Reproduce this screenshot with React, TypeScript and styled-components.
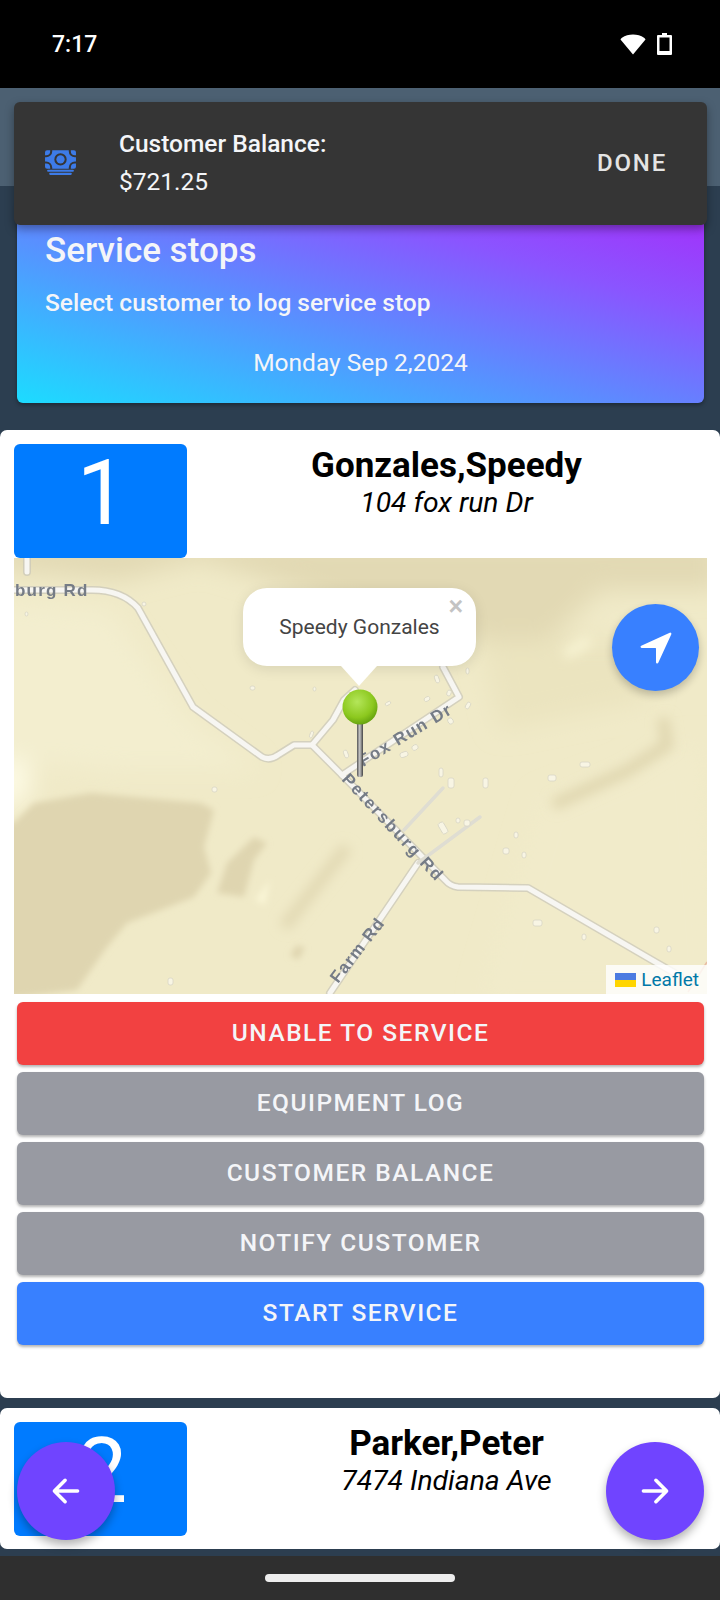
import styled, { createGlobalStyle } from "styled-components";
import { IoArrowBack, IoArrowForward, IoCash, IoNavigate } from "react-icons/io5";

const Global = createGlobalStyle`
  html, body { margin: 0; padding: 0; background: #000; }
  * { box-sizing: border-box; }
  body { font-family: Roboto, "Liberation Sans", sans-serif; }
`;

const Page = styled.div`
  position: relative;
  display: flex;
  flex-direction: column;
  width: 720px;
  height: 1600px;
  overflow: hidden;
  background: #2c3e50;
`;
const StatusBar = styled.div`
  display: flex;
  align-items: center;
  justify-content: space-between;
  height: 88px;
  flex: none;
  padding: 0 48px 0 52px;
  background: #000;
  color: #fff;
  font-size: 23px;
  font-weight: 500;
`;
const StatusIcons = styled.div`
  display: flex;
  align-items: center;
  gap: 11px;
`;
const Header = styled.div`
  height: 98px;
  flex: none;
  background: #4c6072;
`;
const Content = styled.div`
  flex: 1;
  display: flex;
  flex-direction: column;
  min-height: 0;
`;
const Hero = styled.div`
  display: flex;
  flex-direction: column;
  height: 203px;
  flex: none;
  margin: 14px 16px 0 17px;
  padding: 32px 28px 0;
  border-radius: 6px;
  color: #f4f5f8;
  background: linear-gradient(to top right, #1cdcff 0%, #5a8eff 42%, #8a55ff 72%, #a62bfa 100%);
  box-shadow: 0 2px 4px rgba(0, 0, 0, 0.35);
`;
const HeroTitle = styled.div`
  font-size: 35px;
  font-weight: 500;
  line-height: 38px;
`;
const HeroSub = styled.div`
  margin-top: 18px;
  font-size: 24.500px;
  font-weight: 500;
  line-height: 30px;
`;
const HeroDate = styled.div`
  margin-top: 30px;
  font-size: 24.500px;
  line-height: 30px;
  text-align: center;
`;
const StopCard = styled.div<{ $top: number; $height: number }>`
  flex: none;
  height: ${(p) => p.$height}px;
  margin-top: ${(p) => p.$top}px;
  padding-top: 14px;
  background: #fff;
  border-radius: 7px;
`;
const StopHead = styled.div`
  display: flex;
  height: 114px;
  padding: 0 14px;
`;
const NumBox = styled.div`
  display: flex;
  align-items: center;
  justify-content: center;
  flex: none;
  width: 173px;
  height: 114px;
  border-radius: 6px;
  background: #007bff;
  color: #fff;
  font-size: 90px;
  font-weight: 400;
  line-height: 1;
  padding: 0 0 14px 3px;
`;
const StopInfo = styled.div`
  flex: 1;
  text-align: center;
`;
const StopName = styled.div`
  color: #000;
  font-size: 35px;
  font-weight: 700;
  line-height: 43px;
`;
const StopAddress = styled.div`
  color: #000;
  font-size: 28.300px;
  font-style: italic;
  line-height: 31px;
`;
const MapBox = styled.div`
  position: relative;
  height: 436px;
  margin: 0 13px 0 14px;
  overflow: hidden;
  background: #f0eac8;
`;
const MapArt = styled.svg`
  display: block;
  width: 100%;
  height: 100%;
`;
const Popup = styled.div`
  position: absolute;
  left: 229px;
  top: 30px;
  display: flex;
  align-items: center;
  justify-content: center;
  width: 233px;
  height: 78px;
  border-radius: 24px;
  background: #fff;
  color: #444;
  font-size: 21px;
  box-shadow: 0 3px 14px rgba(0, 0, 0, 0.1);

  &::after {
    content: "";
    position: absolute;
    left: 98px;
    top: 78px;
    border-left: 18px solid transparent;
    border-right: 18px solid transparent;
    border-top: 20px solid #fff;
  }
`;
const PopupClose = styled.span`
  position: absolute;
  right: 13px;
  top: 3px;
  color: #c3c3c3;
  font-family: "Liberation Sans", sans-serif;
  font-size: 25px;
  font-weight: 700;
  line-height: 30px;
`;
const Pin = styled.svg`
  position: absolute;
  left: 328px;
  top: 131px;
`;
const NavFab = styled.div`
  position: absolute;
  right: 8px;
  top: 46px;
  display: flex;
  align-items: center;
  justify-content: center;
  width: 87px;
  height: 87px;
  border-radius: 50%;
  background: #3880ff;
  color: #fff;
  box-shadow: 0 4px 8px rgba(0, 0, 0, 0.22);
`;
const Attribution = styled.div`
  position: absolute;
  right: 0;
  bottom: 0;
  display: flex;
  align-items: center;
  gap: 5px;
  height: 29px;
  padding: 0 8px 0 9px;
  background: rgba(255, 255, 255, 0.8);
  color: #0078a8;
  font-size: 19px;
`;
const Actions = styled.div`
  display: flex;
  flex-direction: column;
  gap: 7px;
  margin: 8px 16px 0 17px;
`;
const Action = styled.div<{ $bg: string }>`
  display: flex;
  align-items: center;
  justify-content: center;
  height: 63px;
  padding-bottom: 2px;
  border-radius: 6px;
  background: ${(p) => p.$bg};
  color: #f4f5f8;
  font-size: 24.500px;
  font-weight: 500;
  letter-spacing: 1.5px;
  box-shadow: 0 2px 3px rgba(0, 0, 0, 0.3);
`;
const Snack = styled.div`
  position: absolute;
  left: 14px;
  top: 102px;
  display: flex;
  align-items: center;
  width: 693px;
  height: 123px;
  padding-bottom: 2px;
  border-radius: 6px;
  background: #353535;
  box-shadow: 0 4px 10px rgba(0, 0, 0, 0.35);
`;
const SnackIcon = styled.div`
  display: flex;
  flex: none;
  width: 105px;
  padding-left: 30px;
  color: #3d7be8;
`;
const SnackText = styled.div`
  flex: 1;
  color: #f4f5f8;
  font-size: 24.500px;
  line-height: 38px;
`;
const SnackTitle = styled.div`
  font-weight: 500;
`;
const SnackAction = styled.div`
  padding-right: 40px;
  color: #e4e4e4;
  font-size: 24px;
  font-weight: 500;
  letter-spacing: 1.800px;
`;
const RoundFab = styled.div<{ $side: "left" | "right" }>`
  position: absolute;
  ${(p) => p.$side}: ${(p) => (p.$side === "left" ? 17 : 16)}px;
  top: 1442px;
  display: flex;
  align-items: center;
  justify-content: center;
  width: 98px;
  height: 98px;
  border-radius: 50%;
  background: #7044ff;
  color: #fff;
  box-shadow: 0 5px 10px rgba(0, 0, 0, 0.3);
`;
const NavBar = styled.div`
  display: flex;
  align-items: center;
  justify-content: center;
  flex: none;
  height: 44px;
  background: #2f2f2f;
`;
const Handle = styled.div`
  width: 190px;
  height: 8px;
  border-radius: 4px;
  background: #eee;
`;

const buildings = [
  [439, 768, 4, 9, 0], [448, 778, 6, 10, 0], [483, 778, 5, 10, 0], [548, 775, 8, 6, 0],
  [580, 762, 10, 5, 0], [440, 822, 6, 12, -30], [456, 818, 4, 5, 0], [464, 820, 6, 6, 0],
  [514, 832, 4, 6, 0], [503, 848, 6, 6, 0], [522, 852, 4, 6, 0], [533, 920, 9, 6, 0],
  [582, 934, 4, 6, 0], [654, 927, 5, 6, 0], [667, 946, 4, 6, 0], [212, 787, 5, 5, 0],
  [168, 978, 5, 7, 0], [25, 612, 3, 4, 0], [142, 602, 4, 4, 0], [250, 686, 5, 4, 0],
  [313, 687, 3, 4, 0], [435, 675, 4, 8, -20], [424, 697, 6, 4, -30], [447, 690, 4, 6, 20],
  [466, 668, 3, 6, 0], [466, 702, 4, 7, 30], [400, 752, 8, 5, -20], [412, 745, 6, 5, -30],
  [385, 702, 6, 3, -30], [344, 750, 4, 8, -20], [310, 731, 3, 7, 20], [448, 718, 5, 6, -30],
];

const roads = [
  "M27 558V572M14 590H92Q122 590 138 608L193 707L262 757Q270 761 278 755L294 745H312L342 775L445 880Q450 886 458 887L528 888L657 963L680 976",
  "M312 745L333 720L344 700L355 690",
  "M342 775L459 697L443 667",
  "M330 993L418 863",
];

function MapPicture() {
  return (
    <MapArt viewBox="14 558 693 436">
      <defs>
        <filter id="soft" x="-30%" y="-30%" width="160%" height="160%">
          <feGaussianBlur stdDeviation="12" />
        </filter>
        <filter id="softer" x="-30%" y="-30%" width="160%" height="160%">
          <feGaussianBlur stdDeviation="3" />
        </filter>
        <filter id="ridge" x="-30%" y="-30%" width="160%" height="160%">
          <feGaussianBlur stdDeviation="6" />
        </filter>
        <filter id="hair" x="-5%" y="-5%" width="110%" height="110%">
          <feGaussianBlur stdDeviation="0.5" />
        </filter>
      </defs>
      <g filter="url(#soft)">
        <path d="M0 540H720V590L600 590L540 650L420 630L300 590L200 560L120 580L0 570Z" fill="#e2d9b4" />
        <path d="M-10 600L110 610L190 720L260 770L120 770L-10 760Z" fill="#f3eecf" />
        <path d="M-10 760L30 760L30 800L-10 810Z" fill="#fdfae4" />
        <path d="M480 640L640 640L650 700L500 730Z" fill="#ebe4bf" />
        <path d="M540 800L700 740L720 1000L480 1000Z" fill="#f1ebca" />
      </g>
      <g filter="url(#softer)">
        <path d="M14 823L34 803L91 793L201 803L214 810L204 847L211 873L194 897L161 910L127 923L107 947L77 990L0 1000V823Z" fill="#dfd5b0" />
        <path d="M254 837L227 863L217 893L244 897L254 860L267 843Z" fill="#dfd5b0" />
        <path d="M297 945L290 955L298 960L305 948Z" fill="#dfd5b0" />
        <path d="M255 900L270 880L265 905Z" fill="#f9f5d6" />
      </g>
      <g filter="url(#ridge)" fill="none">
        <path d="M347 847L284 927" stroke="#e2d9b4" strokeWidth="12" />
        <path d="M663 718L667 745L627 771L553 805" stroke="#e0d7b0" strokeWidth="12" />
        <path d="M565 655L590 640" stroke="#f8f4d4" strokeWidth="10" />
      </g>
      <g filter="url(#hair)">
        <path d="M688 992L707 962" fill="none" stroke="#e8bda4" strokeWidth="1.500" />
        <g fill="none" strokeLinejoin="round" strokeLinecap="round">
          <g stroke="#c9c6ba" strokeWidth="8" opacity="0.7">
            {roads.map((d) => (
              <path key={d} d={d} />
            ))}
          </g>
          <g stroke="#f7f6f2" strokeWidth="5">
            {roads.map((d) => (
              <path key={d} d={d} />
            ))}
          </g>
          <path d="M418 863L480 817M404 830L443 788" stroke="#dfddd2" strokeWidth="3.500" />
        </g>
        {buildings.map(([x, y, w, h, r], i) => (
          <rect
            key={i}
            x={x}
            y={y}
            width={w}
            height={h}
            rx={2}
            fill="#f8f5e4"
            stroke="#d8d5c5"
            strokeWidth="0.8"
            transform={`rotate(${r} ${x + w / 2} ${y + h / 2})`}
          />
        ))}
        <g fill="#757b86" fontFamily='"Liberation Sans", sans-serif' fontSize="17" fontWeight="700" letterSpacing="1.200">
          <text x="15" y="596">burg Rd</text>
          <text transform="translate(363 767) rotate(-31)" letterSpacing="1.400">Fox Run Dr</text>
          <text transform="translate(341 780) rotate(47)" letterSpacing="1.800">Petersburg Rd</text>
          <text transform="translate(338 984) rotate(-52)">Farm Rd</text>
        </g>
      </g>
    </MapArt>
  );
}

function MapPin() {
  return (
    <Pin width="36" height="90" viewBox="0 0 36 90">
      <defs>
        <radialGradient id="ball" cx="0.42" cy="0.35" r="0.7">
          <stop offset="0" stopColor="#b4e65a" />
          <stop offset="0.65" stopColor="#8cc81e" />
          <stop offset="1" stopColor="#5e9c0c" />
        </radialGradient>
        <linearGradient id="stem" x1="0" x2="1" y1="0" y2="0">
          <stop offset="0" stopColor="#555" />
          <stop offset="0.45" stopColor="#c8c8c8" />
          <stop offset="1" stopColor="#444" />
        </linearGradient>
      </defs>
      <rect x="15" y="30" width="6" height="58" rx="2" fill="url(#stem)" />
      <circle cx="18" cy="18" r="17.500" fill="url(#ball)" />
    </Pin>
  );
}

export default function App() {
  return (
    <Page>
      <Global />
      <StatusBar>
        <span>7:17</span>
        <StatusIcons>
          <svg width="26" height="21" viewBox="0 0 26 21">
            <path d="M13 20.500L.5 5.500Q1 4.500 2 3.800C5 1.500 9 .5 13 .5s8 1 11 3.300q1 .7 1.500 1.700Z" fill="#fff" />
          </svg>
          <svg width="15" height="22" viewBox="0 0 15 22">
            <path d="M5 0h5v2h4a1 1 0 0 1 1 1v18a1 1 0 0 1-1 1H1a1 1 0 0 1-1-1V3a1 1 0 0 1 1-1h4Z" fill="#fff" />
            <rect x="2.500" y="4.500" width="10" height="13.500" fill="#000" />
          </svg>
        </StatusIcons>
      </StatusBar>
      <Header />
      <Content>
        <Hero>
          <HeroTitle>Service stops</HeroTitle>
          <HeroSub>Select customer to log service stop</HeroSub>
          <HeroDate>Monday Sep 2,2024</HeroDate>
        </Hero>
        <StopCard $top={27} $height={968}>
          <StopHead>
            <NumBox>1</NumBox>
            <StopInfo>
              <StopName>Gonzales,Speedy</StopName>
              <StopAddress>104 fox run Dr</StopAddress>
            </StopInfo>
          </StopHead>
          <MapBox>
            <MapPicture />
            <Popup>
              Speedy Gonzales
              <PopupClose>×</PopupClose>
            </Popup>
            <MapPin />
            <NavFab>
              <IoNavigate size={38} />
            </NavFab>
            <Attribution>
              <svg width="21" height="14" viewBox="0 0 21 14">
                <rect width="21" height="7" fill="#4c7be1" />
                <rect y="7" width="21" height="7" fill="#ffd500" />
              </svg>
              Leaflet
            </Attribution>
          </MapBox>
          <Actions>
            <Action $bg="#f24141">UNABLE TO SERVICE</Action>
            <Action $bg="#989aa2">EQUIPMENT LOG</Action>
            <Action $bg="#989aa2">CUSTOMER BALANCE</Action>
            <Action $bg="#989aa2">NOTIFY CUSTOMER</Action>
            <Action $bg="#3880ff">START SERVICE</Action>
          </Actions>
        </StopCard>
        <StopCard $top={10} $height={141}>
          <StopHead>
            <NumBox>2</NumBox>
            <StopInfo>
              <StopName>Parker,Peter</StopName>
              <StopAddress>7474 Indiana Ave</StopAddress>
            </StopInfo>
          </StopHead>
        </StopCard>
      </Content>
      <NavBar>
        <Handle />
      </NavBar>
      <Snack>
        <SnackIcon>
          <IoCash size={33} />
        </SnackIcon>
        <SnackText>
          <SnackTitle>Customer Balance:</SnackTitle>
          <div>$721.25</div>
        </SnackText>
        <SnackAction>DONE</SnackAction>
      </Snack>
      <RoundFab $side="left">
        <IoArrowBack size={38} />
      </RoundFab>
      <RoundFab $side="right">
        <IoArrowForward size={38} />
      </RoundFab>
    </Page>
  );
}
